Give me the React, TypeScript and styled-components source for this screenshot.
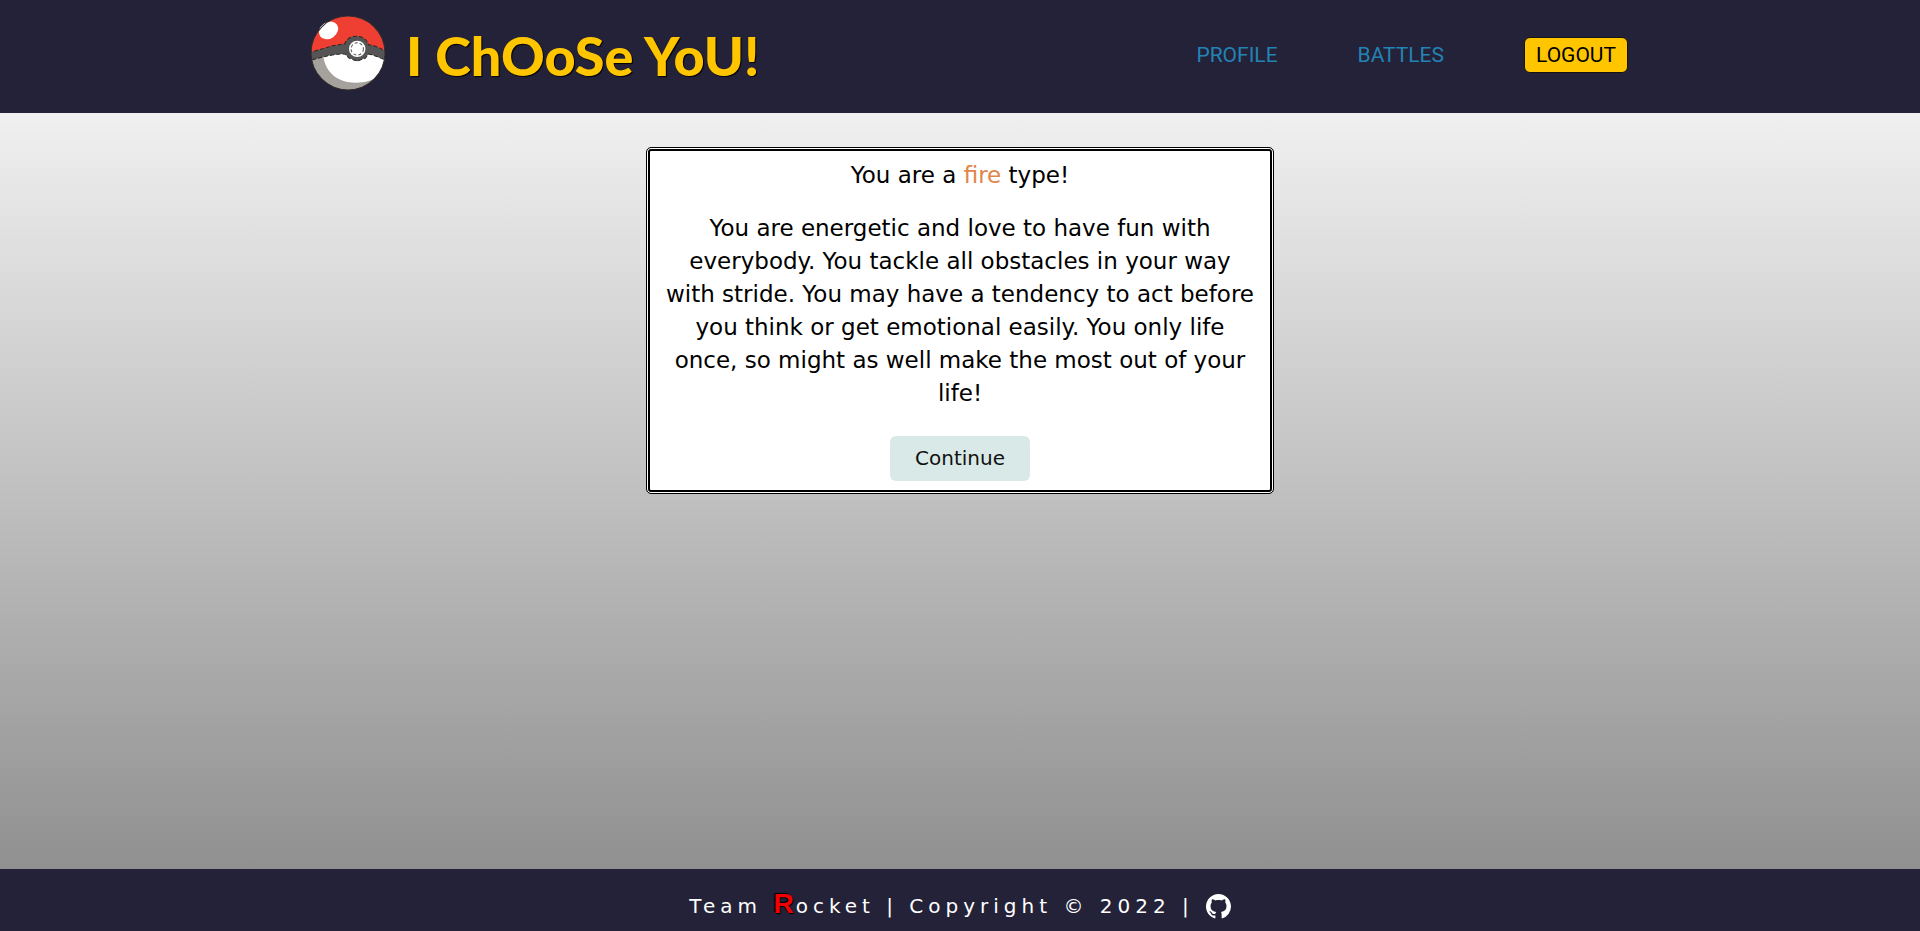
import React from "react";
import styled, { createGlobalStyle } from "styled-components";

const GlobalStyle = createGlobalStyle`
  * { box-sizing: border-box; }
  body { margin: 0; font-family: "DejaVu Sans", Roboto, sans-serif; color: #000; }
`;

const Page = styled.div`
  display: flex;
  flex-direction: column;
  min-height: 100vh;
`;

const Header = styled.header`
  background: #242238;
`;

const HeaderInner = styled.div`
  display: flex;
  align-items: center;
  justify-content: space-between;
  max-width: 1336px;
  margin: 0 auto;
  padding: 14px 0 20px 18px;
`;

const Brand = styled.a`
  display: flex;
  align-items: center;
  gap: 20px;
  text-decoration: none;
`;

const Title = styled.h1`
  margin: 0;
  padding-top: 5px;
  font-family: Lato, sans-serif;
  font-size: 54px;
  font-weight: 900;
  line-height: 74px;
  color: #ffc600;
  text-shadow: 1px 1px 1px #000;
`;

const Nav = styled.nav`
  display: flex;
  align-items: center;
  gap: 80px;
  padding-top: 2px;
  font-family: Roboto, sans-serif;
  font-size: 21px;
  line-height: 32px;
`;

const NavLink = styled.a`
  color: #2283b5;
  text-decoration: none;
`;

const LogoutButton = styled.button`
  padding: 0 11px;
  border: 1px solid #161212;
  border-radius: 6px;
  background: #ffc600;
  color: #000;
  font: inherit;
  line-height: 34px;
`;

const Main = styled.main`
  display: flex;
  flex: 1;
  flex-direction: column;
  align-items: center;
  padding: 34px 16px;
  background: linear-gradient(#f0f0f0, #909090);
`;

const Card = styled.section`
  width: 100%;
  max-width: 628px;
  padding: 11px 15px 12px;
  border: 1px solid #000;
  border-radius: 5px;
  box-shadow: inset 0 0 0 1px #fff, inset 0 0 0 3px #000;
  background: #fff;
  font-size: 23px;
  line-height: 33px;
  text-align: center;
`;

const CardText = styled.p`
  margin: 0 0 20px;
`;

const TypeName = styled.span`
  color: #e0854c;
`;

const ContinueButton = styled.button`
  height: 45px;
  min-width: 140px;
  padding: 0 20px;
  margin-top: 6px;
  border: 0;
  border-radius: 6px;
  background: #d9e9e7;
  color: #111;
  font: inherit;
  font-size: 20px;
`;

const Footer = styled.footer`
  display: flex;
  align-items: center;
  justify-content: center;
  gap: 12px;
  height: 62px;
  padding-top: 12px;
  background: #242238;
  color: #fff;
  font-size: 20px;
  line-height: 32px;
  letter-spacing: 5px;
`;

const FooterText = styled.p`
  margin: 0;
`;

const RedR = styled.span`
  color: #f00000;
  font-family: "Liberation Sans", sans-serif;
  font-size: 28px;
  font-weight: 700;
  line-height: 1;
  letter-spacing: 2px;
  text-shadow: 1px 1px 1px #000, -1px -1px 1px #000;
`;

const IconLink = styled.a`
  display: flex;
  color: #fff;
`;

function Pokeball() {
  return (
    <svg width="76" height="79" viewBox="0 0 74 77" aria-hidden="true">
      <defs>
        <clipPath id="ball">
          <circle cx="37" cy="38" r="36" />
        </clipPath>
      </defs>
      <g clipPath="url(#ball)">
        <rect width="74" height="79" fill="#a5a19d" />
        <path d="M13 41C15 58 28 67 44 67C57 67 66 63 71 55L76 38L47 35Z" fill="#fff" />
        <path d="M0 0H74V38L58 31H34L0 38Z" fill="#ef3f32" />
        <path
          d="M-2 38Q12 34 22 31L34 29C37 19 54 19 57 30Q66 31 76 38V47Q67 41 57 39L54 43L46 46L38 43L34 39Q24 38 -2 46Z"
          fill="#555"
          stroke="#2c2828"
          strokeDasharray="4 2"
        />
      </g>
      <circle cx="46" cy="34" r="8" fill="#fff" />
      <circle cx="46" cy="34" r="6" fill="none" stroke="#555" strokeDasharray="3 2" />
      <ellipse cx="18" cy="16" rx="10" ry="8" fill="#fff" transform="rotate(-35 18 16)" />
      <circle cx="37" cy="38" r="36" fill="none" stroke="#352b2b" strokeWidth="1" />
    </svg>
  );
}

function GithubIcon() {
  return (
    <svg width="25" height="25" viewBox="0 0 16 16" fill="currentColor" aria-hidden="true">
      <path d="M8 0C3.58 0 0 3.58 0 8c0 3.54 2.29 6.53 5.47 7.59.4.07.55-.17.55-.38 0-.19-.01-.82-.01-1.49-2.01.37-2.53-.49-2.69-.94-.09-.23-.48-.94-.82-1.13-.28-.15-.68-.52-.01-.53.63-.01 1.08.58 1.23.82.72 1.21 1.87.87 2.33.66.07-.52.28-.87.51-1.07-1.78-.2-3.64-.89-3.64-3.95 0-.87.31-1.59.82-2.15-.08-.2-.36-1.02.08-2.12 0 0 .67-.21 2.2.82.64-.18 1.32-.27 2-.27s1.36.09 2 .27c1.53-1.04 2.2-.82 2.2-.82.44 1.1.16 1.92.08 2.12.51.56.82 1.27.82 2.15 0 3.07-1.87 3.75-3.65 3.95.29.25.54.73.54 1.48 0 1.07-.01 1.93-.01 2.2 0 .21.15.46.55.38A8.01 8.01 0 0 0 16 8c0-4.42-3.58-8-8-8z" />
    </svg>
  );
}

export default function App() {
  return (
    <Page>
      <GlobalStyle />
      <Header>
        <HeaderInner>
          <Brand href="#">
            <Pokeball />
            <Title>I ChOoSe YoU!</Title>
          </Brand>
          <Nav>
            <NavLink href="#profile">PROFILE</NavLink>
            <NavLink href="#battles">BATTLES</NavLink>
            <LogoutButton type="button">LOGOUT</LogoutButton>
          </Nav>
        </HeaderInner>
      </Header>
      <Main>
        <Card>
          <CardText>
            You are a <TypeName>fire</TypeName> type!
          </CardText>
          <CardText>
            You are energetic and love to have fun with everybody. You tackle all obstacles in your
            way with stride. You may have a tendency to act before you think or get emotional easily.
            You only life once, so might as well make the most out of your life!
          </CardText>
          <ContinueButton type="button">Continue</ContinueButton>
        </Card>
      </Main>
      <Footer>
        <FooterText>
          Team <RedR>R</RedR>ocket | Copyright © 2022 |
        </FooterText>
        <IconLink href="#github" aria-label="GitHub">
          <GithubIcon />
        </IconLink>
      </Footer>
    </Page>
  );
}
